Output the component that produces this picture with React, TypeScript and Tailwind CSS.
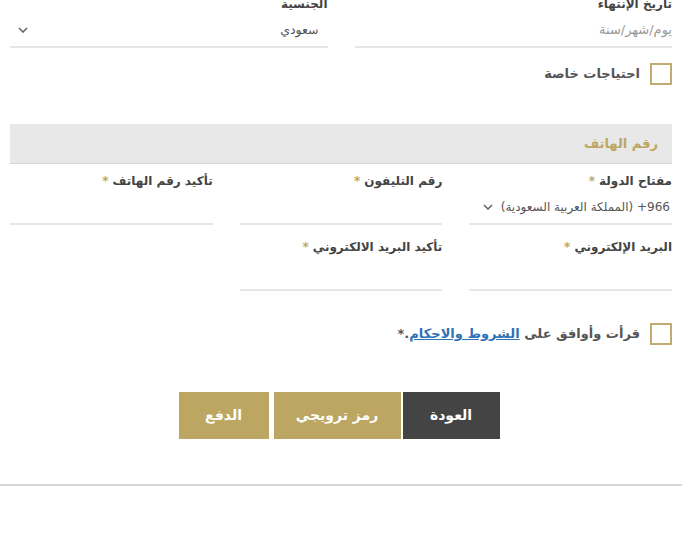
import React from 'react';

const gold = 'text-[#bca662]';

function Chevron() {
  return (
    <svg width="10" height="6" viewBox="0 0 10 6" className="shrink-0">
      <path d="M1 1l4 4 4-4" fill="none" stroke="#666" strokeWidth="1.6" />
    </svg>
  );
}

function Label({ text, required }: { text: string; required?: boolean }) {
  return (
    <label className="block h-[20px] text-[12px] leading-[20px] font-bold text-[#444]">
      {text}
      {required && <span className={`${gold} mr-1`}>*</span>}
    </label>
  );
}

function Field({
  label,
  required,
  children,
}: {
  label: string;
  required?: boolean;
  children?: React.ReactNode;
}) {
  return (
    <div>
      <Label text={label} required={required} />
      <div className="flex h-[34px] items-center border-b-2 border-[#e6e6e6] text-[12px] text-[#555]">
        {children}
      </div>
    </div>
  );
}

function Checkbox() {
  return <span className="block h-[22px] w-[22px] shrink-0 border-2 border-[#c2ab70] bg-white" />;
}

export default function App() {
  return (
    <div
      dir="rtl"
      className="min-h-[543px] overflow-hidden bg-white font-['DejaVu_Sans',sans-serif]"
    >
      <div className="px-[10px]">
        <div className="-mt-[6px] grid grid-cols-2 gap-x-[27px]">
          <Field label="تاريخ الإنتهاء">
            <span className="text-[13px] text-[#999]">يوم/شهر/سنة</span>
          </Field>
          <Field label="الجنسية">
            <div className="flex w-full items-center justify-between pr-[9px] pl-[8px]">
              <span className="text-[12.5px]">سعودي</span>
              <Chevron />
            </div>
          </Field>
        </div>

        <div className="mt-[15px] flex items-center gap-[10px]">
          <Checkbox />
          <span className="text-[13px] font-bold text-[#555]">احتياجات خاصة</span>
        </div>

        <div className="mt-[39px] flex h-[40px] items-center border-b border-[#d6d6d6] bg-[#e8e8e8] px-[14px]">
          <span className={`text-[13px] font-bold ${gold}`}>رقم الهاتف</span>
        </div>

        <div className="mt-[7px] grid grid-cols-3 gap-x-[27px] gap-y-[12px]">
          <Field label="مفتاح الدولة" required>
            <div className="flex items-center gap-[8px] pr-[2px]">
              <span className="text-[12px]" dir="rtl">
                966+ (المملكة العربية السعودية)
              </span>
              <Chevron />
            </div>
          </Field>
          <Field label="رقم التليفون" required />
          <Field label="تأكيد رقم الهاتف" required />
          <Field label="البريد الإلكتروني" required />
          <Field label="تأكيد البريد الالكتروني" required />
          <div />
        </div>

        <div className="mt-[32px] flex items-center gap-[10px]">
          <Checkbox />
          <span className="text-[13px] font-bold text-[#555]">
            قرأت وأوافق على{' '}
            <a className="text-[#2f72b6] underline">الشروط والاحكام</a>.*
          </span>
        </div>

        <div className="mt-[47px] flex justify-center pr-[4px]">
          <button className="h-[47px] w-[97px] bg-[#444] text-[14px] font-bold text-white">
            العودة
          </button>
          <button className="mr-[2px] h-[47px] w-[127px] bg-[#bca662] text-[14px] font-bold text-white">
            رمز ترويجي
          </button>
          <button className="mr-[5px] h-[47px] w-[90px] bg-[#bca662] text-[14px] font-bold text-white">
            الدفع
          </button>
        </div>
      </div>

      <div className="mt-[45px] border-t-2 border-[#d8d8d8]" />
    </div>
  );
}
